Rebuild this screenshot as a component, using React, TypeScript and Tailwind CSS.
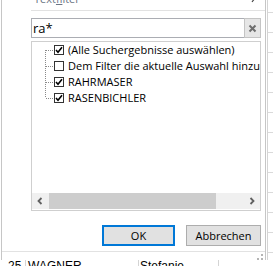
import React from "react";

const FONT = { fontFamily: '"Open Sans", "Noto Sans", sans-serif' };

function Check({ checked }: { checked: boolean }) {
  return (
    <div className="w-[10px] h-[10px] border border-[#333333] bg-white shrink-0 flex items-center justify-center">
      {checked && (
        <svg width="8" height="8" viewBox="0 0 8 8">
          <path d="M1 4 L3 6.2 L7 1.2" fill="none" stroke="#000" strokeWidth="1.6" />
        </svg>
      )}
    </div>
  );
}

function TreeLines({ pos }: { pos: "first" | "mid" | "last" }) {
  const y1 = pos === "first" ? 8 : 0;
  const y2 = pos === "last" ? 8 : 16;
  return (
    <svg width="22" height="16" className="shrink-0" shapeRendering="crispEdges">
      <line x1="13.5" y1={y1} x2="13.5" y2={y2} stroke="#8a8a8a" strokeWidth="1" strokeDasharray="1 1" />
      <line x1="14" y1="8.5" x2="22" y2="8.5" stroke="#8a8a8a" strokeWidth="1" strokeDasharray="1 1" />
    </svg>
  );
}

function Row({ pos, checked, label }: { pos: "first" | "mid" | "last"; checked: boolean; label: string }) {
  return (
    <div className="flex items-center h-[16px] whitespace-nowrap">
      <TreeLines pos={pos} />
      <Check checked={checked} />
      <span className="ml-[4px] text-[11px] leading-[16px] text-black">{label}</span>
    </div>
  );
}

function Dialog() {
  return (
    <div className="ml-[1px] w-[265px] h-[260px] border-l border-r border-[#c6c6c6] bg-white flex flex-col">
      <div className="flex-1 pl-[29px] flex flex-col">
        <div className="h-[10px] overflow-hidden flex justify-between pr-[8px]">
          <span className="-mt-[9px] ml-[3px] text-[11px] leading-[16px] text-[#6b7585]">
            Text<span className="underline">f</span>ilter
          </span>
          <svg width="6" height="10" viewBox="0 0 6 10" className="-mt-[7px]">
            <path d="M1 1 L4 5 L1 9" fill="none" stroke="#444" strokeWidth="1.2" />
          </svg>
        </div>
        <div className="h-px bg-[#e2e2e2]" />
        <div className="mt-[7px] mr-[4px] h-[20px] border border-[#abadb3] flex">
          <div className="flex-1 pl-[1px] text-[13px] leading-[18px] text-black">ra*</div>
          <div className="w-[17px] -my-[1px] -mr-[1px] border border-[#c4c4c4] bg-[#e6e6e6] flex items-center justify-center">
            <svg width="9" height="9" viewBox="0 0 9 9">
              <path d="M1.5 1.5 L7.5 7.5 M7.5 1.5 L1.5 7.5" stroke="#6e6e6e" strokeWidth="2" />
            </svg>
          </div>
        </div>
        <div className="mt-[3px] mr-[4px] h-[170px] border border-[#cfcfcf] flex flex-col">
          <div className="flex-1 overflow-hidden">
            <Row pos="first" checked label="(Alle Suchergebnisse auswählen)" />
            <Row pos="mid" checked={false} label="Dem Filter die aktuelle Auswahl hinzufügen" />
            <Row pos="mid" checked label="RAHRMASER" />
            <Row pos="last" checked label="RASENBICHLER" />
          </div>
          <div className="h-[16px] mb-[1px] bg-[#f0f0f0] flex">
            <div className="w-[16px] flex items-center justify-center">
              <svg width="6" height="8" viewBox="0 0 6 8">
                <path d="M4.5 1 L1.5 4 L4.5 7" fill="none" stroke="#606060" strokeWidth="1.8" />
              </svg>
            </div>
            <div className="ml-[1px] w-[167px] bg-[#cdcdcd]" />
            <div className="flex-1" />
            <div className="w-[16px] flex items-center justify-center">
              <svg width="6" height="8" viewBox="0 0 6 8">
                <path d="M1.5 1 L4.5 4 L1.5 7" fill="none" stroke="#606060" strokeWidth="1.8" />
              </svg>
            </div>
          </div>
        </div>
        <div className="mt-[14px] mr-[4px] flex justify-end gap-[11px]">
          <button className="w-[73px] h-[21px] border-2 border-[#0078d7] bg-[#e1e1e1] text-[11px] leading-[17px] text-black">
            OK
          </button>
          <button className="w-[75px] h-[21px] border border-[#adadad] bg-[#e1e1e1] text-[11px] leading-[19px] text-black">
            Abbrechen
          </button>
        </div>
      </div>
      <div className="h-[9px] border-t border-[#e2e2e2] flex justify-end items-end pr-[2px] pb-[0px]">
        <svg width="7" height="7" viewBox="0 0 7 7" shapeRendering="crispEdges">
          <rect x="5" y="1" width="2" height="2" fill="#b4b4b4" />
          <rect x="1" y="5" width="2" height="2" fill="#b4b4b4" />
          <rect x="5" y="5" width="2" height="2" fill="#b4b4b4" />
        </svg>
      </div>
    </div>
  );
}

function Strip() {
  const rows = Array.from({ length: 13 });
  return (
    <div className="flex-1 pl-[1px] flex">
      <div className="flex-1 border-l border-[#d4d4d4] flex flex-col">
        <div className="h-[13px] border-b border-[#dadada] shrink-0" />
        {rows.map((_, i) => (
          <div key={i} className="h-[20px] border-b border-[#dadada] shrink-0" />
        ))}
      </div>
    </div>
  );
}

function ExcelRow() {
  return (
    <div className="h-[6px] flex text-[12px] leading-[12px] text-black" style={{ fontFamily: '"Liberation Sans", Arial, sans-serif' }}>
      <div className="w-[26px] border-r border-[#d4d4d4] pl-[8px]">25</div>
      <div className="w-[113px] border-r border-[#d4d4d4] pl-[2px]">WAGNER</div>
      <div className="w-[80px] border-r border-[#d4d4d4] pl-[1px]">Stefanie</div>
      <div className="flex-1" />
    </div>
  );
}

export default function App() {
  return (
    <div className="w-[273px] h-[266px] overflow-hidden bg-white flex flex-col" style={FONT}>
      <div className="flex h-[260px] shrink-0">
        <Dialog />
        <Strip />
      </div>
      <ExcelRow />
    </div>
  );
}
